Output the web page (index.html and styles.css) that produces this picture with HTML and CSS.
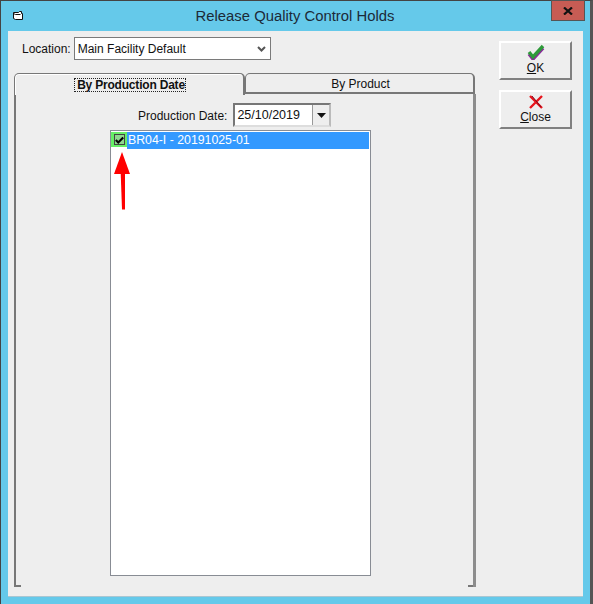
FILE: index.html
```html
<!DOCTYPE html>
<html lang="en">
<head>
  <meta charset="UTF-8" />
  <title>Release Quality Control Holds</title>
  <link rel="stylesheet" href="styles.css">
</head>
<body>
  <div class="window">
    <!-- Title bar -->
    <div class="titlebar">
      <svg class="app-icon" width="12" height="12" viewBox="0 0 12 12">
        <path d="M1.5 2.5H6.5L7.5 1.5H9.5V3.5H10.5V9.5H3.5L1.5 8.5Z" fill="#fff" stroke="#111" stroke-width="1"/>
        <path d="M1.5 3.5L3.5 4.5H8.5" fill="none" stroke="#111" stroke-width="1"/>
      </svg>
      <div class="title">Release Quality Control Holds</div>
      <div class="close-x">
        <svg width="10" height="8" viewBox="0 0 10 8"><path d="M1 0.5L9 7.5M9 0.5L1 7.5" stroke="#111" stroke-width="2.2"/></svg>
      </div>
    </div>

    <div class="client">
      <div class="main-col">
        <div class="location-row">
          <label>Location:</label>
          <div class="select">
            <span>Main Facility Default</span>
            <svg width="9" height="6" viewBox="0 0 9 6"><path d="M1 1L4.5 4.5L8 1" fill="none" stroke="#555" stroke-width="2"/></svg>
          </div>
        </div>

        <div class="tabs">
          <div class="tab active"><span class="focus">By Production Date</span></div>
          <div class="tab">By Product</div>
        </div>

        <div class="tab-panel">
          <div class="date-row">
            <label>Production Date:</label>
            <div class="date-box">
              <span>25/10/2019</span>
              <div class="drop-btn"><svg width="9" height="5" viewBox="0 0 9 5"><path d="M0 0H9L4.5 5Z" fill="#111"/></svg></div>
            </div>
          </div>
          <div class="listbox">
            <div class="list-row">
              <div class="check-cell">
                <div class="check">
                  <svg width="9" height="8" viewBox="0 0 11 9"><path d="M1 4.5L4 7.5L10 1.5" fill="none" stroke="#000" stroke-width="2.6"/></svg>
                </div>
              </div>
              <div class="row-text">BR04-I - 20191025-01</div>
            </div>
          </div>
          <svg class="arrow" width="18" height="58" viewBox="0 0 18 58">
            <path d="M9 0L17 22H1Z" fill="#f00"/>
            <path d="M7.7 21L9 57.5H12L12 21Z" fill="#f00"/>
          </svg>
        </div>
      </div>

      <div class="side-col">
        <div class="btn">
          <svg width="18" height="16" viewBox="0 0 18 16">
            <path d="M2 9L6 14L16 3" fill="none" stroke="#8a2a9a" stroke-width="3.4" transform="translate(0 1)"/>
            <path d="M2 8L6 13L16 2" fill="none" stroke="#2e9a3a" stroke-width="3.4"/>
          </svg>
          <span><u>O</u>K</span>
        </div>
        <div class="btn btn-close">
          <svg width="14" height="14" viewBox="0 0 14 14">
            <path d="M1 1L13 13M13 1L1 13" stroke="#e8141c" stroke-width="2.4"/>
            <path d="M3 1L12 12" stroke="#7a1020" stroke-width="1"/>
          </svg>
          <span><u>C</u>lose</span>
        </div>
      </div>
    </div>
  </div>
</body>
</html>
```

FILE: styles.css
```css
/* Base styling */
html, body {
  margin: 0;
  padding: 0;
}
body {
  width: 593px;
  height: 604px;
  overflow: hidden;
  font-family: "Liberation Sans", Arial, sans-serif;
  font-size: 12px;
  color: #111;
}
.window {
  box-sizing: border-box;
  width: 593px;
  height: 604px;
  display: flex;
  flex-direction: column;
  background: #65c9ea;
  border-top: 1px solid #444;
  border-left: 1px solid #444;
  border-right: 3px solid #555;
}
/* Title bar */
.titlebar {
  height: 30px;
  flex: none;
  display: flex;
  align-items: flex-start;
}
.app-icon {
  margin: 9px 0 0 11px;
  flex: none;
}
.title {
  flex: 1;
  text-align: center;
  font-size: 14.85px;
  line-height: 16px;
  padding-top: 7px;
  padding-left: 15px;
  color: #1c2a38;
}
.close-x {
  box-sizing: border-box;
  width: 34px;
  height: 21px;
  margin-top: -1px;
  margin-right: 5px;
  background: #c75c54;
  border: 1px solid #555;
  display: flex;
  align-items: center;
  justify-content: center;
}
/* Client area */
.client {
  box-sizing: border-box;
  width: 575px;
  height: 566px;
  margin-left: 7px;
  background: #eeeeee;
  border-bottom: 1px solid #a9c6d2;
  display: flex;
}
.main-col {
  width: 468px;
  margin-left: 6px;
  flex: none;
  display: flex;
  flex-direction: column;
}
.location-row {
  display: flex;
  align-items: center;
  gap: 3px;
  margin: 6px 0 0 8px;
  height: 23px;
}
.select {
  box-sizing: border-box;
  width: 197px;
  height: 23px;
  background: #fff;
  border: 1px solid #7a7a7a;
  padding: 0 4px 0 3px;
  display: flex;
  align-items: center;
  justify-content: space-between;
}
/* Tabs */
.tabs {
  display: flex;
  margin-top: 13px;
  height: 21px;
}
.tab {
  box-sizing: border-box;
  width: 231px;
  height: 21px;
  background: #eee;
  border: 1px solid #777;
  border-radius: 5px 5px 0 0;
  border-right-width: 2px;
  text-align: center;
  line-height: 21px;
}
.tab + .tab {
  width: 230px;
  border-bottom: 2px solid #777;
  text-indent: 2px;
}
.tab.active {
  border-bottom: none;
  box-shadow: inset 0 1px 0 #fff, inset 1px 0 0 #fff;
  height: 22px;
  position: relative;
  z-index: 1;
  font-weight: bold;
  letter-spacing: -0.2px;
  padding-top: 1px;
  text-indent: 2px;
}
.focus {
  outline: 1px dotted #222;
  outline-offset: -1px;
  padding: 0 1px;
  display: inline-block;
  line-height: 14px;
}
.tab-panel {
  box-sizing: border-box;
  width: 462px;
  height: 493px;
  position: relative;
  border-left: 2px solid #777;
  border-right: 3px solid #8c8c8c;
}
.tab-panel::before,
.tab-panel::after {
  content: "";
  position: absolute;
  bottom: 0;
  width: 5px;
  height: 2px;
  background: #777;
}
.tab-panel::before { left: 0; }
.tab-panel::after { right: 0; }
.date-row {
  display: flex;
  align-items: center;
  gap: 6px;
  margin: 9px 0 0 122px;
  height: 24px;
}
.date-row label {
  padding-top: 1px;
}
.date-box {
  box-sizing: border-box;
  width: 98px;
  height: 24px;
  background: #fff;
  border: 2px solid;
  border-color: #777 #bbb #ddd #777;
  display: flex;
  align-items: center;
  justify-content: space-between;
  padding-left: 2px;
  font-size: 12.5px;
}
.drop-btn {
  width: 16px;
  height: 20px;
  background: #eee;
  border-left: 1px solid #999;
  display: flex;
  align-items: center;
  justify-content: center;
}
/* List */
.listbox {
  box-sizing: border-box;
  width: 261px;
  height: 446px;
  margin: 3px 0 0 94px;
  background: #fff;
  border: 1px solid #888c94;
  padding: 1px 1px 0 0;
}
.list-row {
  display: flex;
  align-items: flex-start;
  height: 17px;
}
.check-cell {
  width: 16px;
  height: 15px;
  background: #66ee66;
  flex: none;
  display: flex;
  align-items: center;
  justify-content: center;
}
.check {
  box-sizing: border-box;
  width: 11px;
  height: 11px;
  background: #8fd88f;
  border: 1px solid #444;
  display: flex;
  align-items: center;
  justify-content: center;
}
.row-text {
  flex: 1;
  height: 17px;
  line-height: 17px;
  font-size: 12.3px;
  background: #3399ff;
  color: #fff;
  padding-left: 1px;
}
.arrow {
  position: absolute;
  left: 97px;
  top: 58px;
}
/* Buttons */
.side-col {
  margin-left: 17px;
  padding-top: 10px;
  display: flex;
  flex-direction: column;
  gap: 10px;
}
.btn {
  box-sizing: border-box;
  width: 73px;
  height: 39px;
  background: #eee;
  border: 2px solid;
  border-color: #fff #808080 #808080 #fff;
  display: flex;
  flex-direction: column;
  align-items: center;
  padding-top: 1px;
  line-height: 14px;
}
.btn span {
  margin-top: 1px;
}
.btn-close {
  padding-top: 3px;
}
```
